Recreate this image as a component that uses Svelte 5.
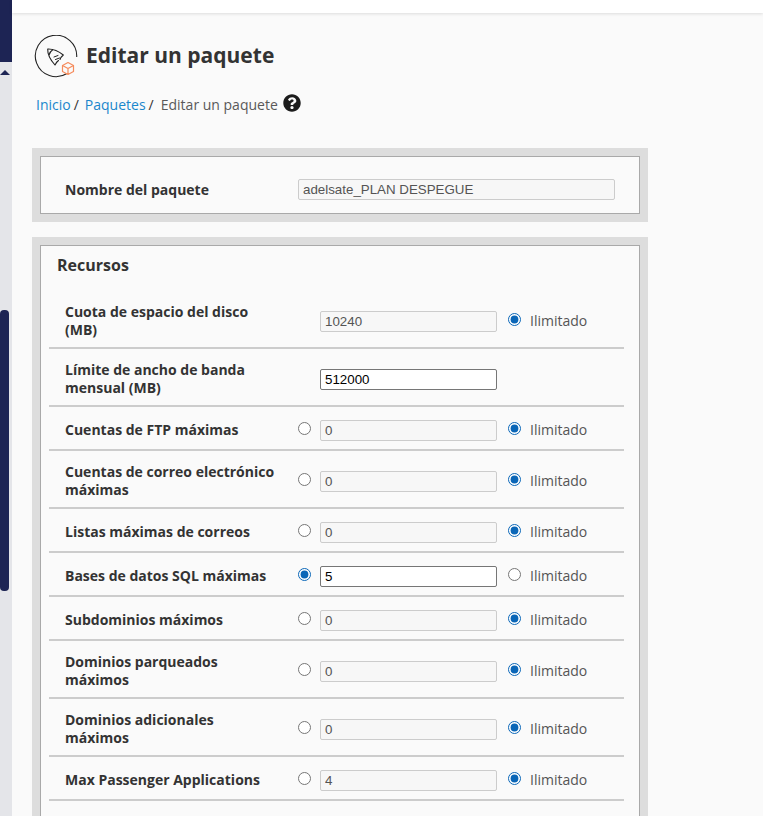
<script>
    const rows = [
        { label: "Cuota de espacio del disco (MB)", value: "10240", tall: true, noLeft: true, unlimited: true },
        { label: "Límite de ancho de banda mensual (MB)", value: "512000", tall: true, noLeft: true, noRight: true },
        { label: "Cuentas de FTP máximas", value: "0", unlimited: true },
        { label: "Cuentas de correo electrónico máximas", value: "0", tall: true, unlimited: true },
        { label: "Listas máximas de correos", value: "0", unlimited: true },
        { label: "Bases de datos SQL máximas", value: "5" },
        { label: "Subdominios máximos", value: "0", unlimited: true },
        { label: "Dominios parqueados máximos", value: "0", tall: true, unlimited: true },
        { label: "Dominios adicionales máximos", value: "0", tall: true, unlimited: true },
        { label: "Max Passenger Applications", value: "4", unlimited: true },
    ];
</script>

<div class="shell">
    <aside class="rail">
        <div class="rail-top"></div>
        <div class="arrow"></div>
        <div class="thumb"></div>
    </aside>

    <div class="content">
        <div class="topbar"></div>

        <main>
            <header class="title">
                <svg class="logo" width="44" height="44" viewBox="0 0 44 44" fill="none">
                    <path d="M33 38.500A20.700 20.700 0 1 1 42.700 22" stroke="#222" stroke-width="1.100" />
                    <path d="M13.700 14C19 13.800 25 16.500 29.300 20M13.700 14C13.500 19 16.500 25 21 30M29.300 20C27.500 21.500 26.500 23 26 24.500M21 30C22 28 23 26.500 24.500 25.500M18.700 14.700C16.800 16 15.500 18 15 20" stroke="#222" stroke-width="1.100" stroke-linecap="round" stroke-linejoin="round" />
                    <path d="M20 22l4-1.500M21.500 24.500l4-1.500" stroke="#222" stroke-width="1" stroke-linecap="round" />
                    <path d="M34 27.500l5.500 3v6l-5.500 3-5.500-3v-6zM28.500 30.500l5.500 3 5.500-3M34 33.500v6" stroke="#f58b5c" stroke-width="1.200" stroke-linejoin="round" fill="#fafafa" />
                </svg>
                <h1>Editar un paquete</h1>
            </header>

            <nav class="crumbs">
                <a href="#inicio">Inicio</a><span class="sep">/</span>
                <a href="#paquetes">Paquetes</a><span class="sep">/</span>
                <span class="current">Editar un paquete</span>
                <svg class="help" width="18" height="18" viewBox="0 0 512 512">
                    <path fill="#1c1c1c" d="M504 256c0 136.997-111.043 248-248 248S8 392.997 8 256C8 119.083 119.043 8 256 8s248 111.083 248 248zM262.655 90c-54.497 0-89.255 22.957-116.549 63.758-3.536 5.286-2.353 12.415 2.715 16.258l34.699 26.31c5.205 3.947 12.621 3.008 16.665-2.122 17.864-22.658 30.113-35.797 57.303-35.797 20.429 0 45.698 13.148 45.698 32.958 0 14.976-12.363 22.667-32.534 33.976C247.128 238.528 216 254.941 216 296v4c0 6.627 5.373 12 12 12h56c6.627 0 12-5.373 12-12v-1.333c0-28.462 83.186-29.647 83.186-106.667 0-58.002-60.165-102-116.531-102zM256 338c-25.365 0-46 20.635-46 46 0 25.364 20.635 46 46 46s46-20.636 46-46c0-25.365-20.635-46-46-46z" />
                </svg>
            </nav>

            <section class="panel name-panel">
                <div class="panel-inner name-row">
                    <label for="pkg">Nombre del paquete</label>
                    <input id="pkg" class="pkg-input" type="text" value="adelsate_PLAN DESPEGUE" disabled />
                </div>
            </section>

            <section class="panel">
                <div class="panel-inner">
                    <h2>Recursos</h2>
                    {#each rows as row, i}
                        <div class="row" class:tall={row.tall}>
                            <span class="row-label">{row.label}</span>
                            <span class="radio-cell">
                                {#if !row.noLeft}
                                    <input type="radio" name="r{i}" checked={!row.unlimited} />
                                {/if}
                            </span>
                            <input class="num" type="text" value={row.value} disabled={row.unlimited} />
                            {#if !row.noRight}
                                <label class="unlimited">
                                    <input type="radio" name="r{i}" checked={row.unlimited} />
                                    <span>Ilimitado</span>
                                </label>
                            {/if}
                        </div>
                    {/each}
                </div>
            </section>
        </main>
    </div>
</div>

<style>
    :global(body) {
        background: #fafafa;
    }

    .shell {
        display: flex;
        height: 816px;
        overflow: hidden;
        font-family: "Open Sans", sans-serif;
        color: #333;
    }

    .rail {
        width: 12px;
        flex: none;
        background: #e4e5e9;
        display: flex;
        flex-direction: column;
    }
    .rail-top {
        width: 100%;
        height: 62px;
        background: #1d2454;
    }
    .arrow {
        width: 0;
        margin-top: 8px;
        border-left: 5px solid transparent;
        border-right: 5px solid transparent;
        border-bottom: 5px solid #1d2454;
    }
    .thumb {
        width: 9px;
        height: 281px;
        margin-top: 235px;
        background: #1d2454;
        border-radius: 4px;
    }

    .content {
        flex: 1;
        min-width: 0;
    }
    .topbar {
        height: 13px;
        background: #fff;
        box-shadow: 0 1px 3px rgba(0, 0, 0, 0.12);
    }

    main {
        padding: 21px 0 0 20px;
        width: 616px;
    }

    .title {
        display: flex;
        align-items: center;
        gap: 8px;
        margin-left: 2px;
        height: 44px;
    }
    .logo {
        margin-top: 2px;
    }
    h1 {
        margin: -2px 0 0;
        font-size: 21px;
        font-weight: 700;
        color: #333;
    }

    .crumbs {
        display: flex;
        align-items: center;
        height: 20px;
        margin: 16px 0 0 4px;
        font-size: 14px;
        color: #555;
    }
    .crumbs a {
        color: #1a87cc;
        text-decoration: none;
    }
    .sep {
        margin: 0 6px 0 3px;
        color: #333;
    }
    .sep:nth-of-type(2) {
        margin-right: 0;
    }
    .current {
        margin-left: 7px;
        color: #595959;
    }
    .help {
        margin-left: 5px;
        margin-top: -2px;
    }

    .panel {
        border: 8px solid #ddd;
        margin-bottom: 15px;
    }
    .name-panel {
        margin-top: 34px;
    }
    .panel-inner {
        border: 1px solid #a9a9a9;
        padding: 0 15px 30px 8px;
    }

    .name-row {
        display: flex;
        align-items: center;
        padding: 8px 24px 0 24px;
        height: 48px;
    }
    .name-row label {
        width: 233px;
        font-size: 14px;
        font-weight: 700;
    }
    input.pkg-input {
        width: 317px;
        padding-left: 3px;
    }

    h2 {
        margin: 0 0 0 8px;
        height: 45px;
        padding-top: 9px;
        box-sizing: border-box;
        font-size: 16px;
        line-height: 20px;
        font-weight: 700;
        color: #333;
    }

    .row {
        display: flex;
        align-items: center;
        height: 44px;
        box-sizing: border-box;
        padding: 4px 0 0 16px;
        border-bottom: 2px solid #ccc;
    }
    .row.tall {
        height: 58px;
    }
    .row-label {
        width: 233px;
        padding-right: 20px;
        box-sizing: border-box;
        flex: none;
        font-size: 14px;
        line-height: 18px;
        font-weight: 700;
        color: #333;
    }
    .radio-cell {
        width: 22px;
        flex: none;
        display: flex;
    }

    input[type="text"] {
        box-sizing: border-box;
        height: 21px;
        margin: 0;
        padding: 1px 4px;
        border: 1px solid #767676;
        border-radius: 2px;
        background: #fff;
        color: #000;
        font-family: "Liberation Sans", sans-serif;
        font-size: 13.333px;
    }
    input[type="text"]:disabled {
        background: #f7f7f7;
        border-color: #ccc;
        color: #545454;
    }
    .num {
        width: 177px;
        flex: none;
    }

    input[type="radio"] {
        width: 13px;
        height: 13px;
        margin: 0;
        accent-color: #0a66b7;
        position: relative;
        top: -2px;
    }

    .unlimited {
        display: flex;
        align-items: center;
        margin-left: 11px;
        font-size: 14px;
        color: #555;
    }
    .unlimited span {
        margin: -2px 0 0 9px;
    }
</style>
